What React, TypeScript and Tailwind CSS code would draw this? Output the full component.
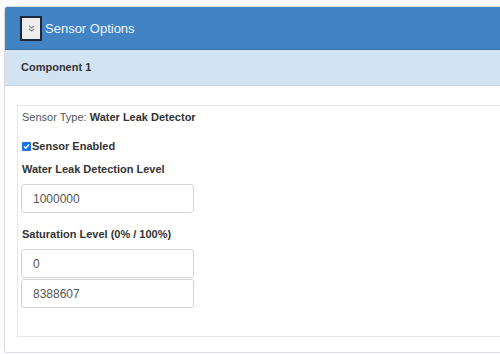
import React from "react";

export default function App() {
  const font = { fontFamily: '"Liberation Sans", Arial, sans-serif' };
  return (
    <div className="w-[500px] h-[354px] overflow-hidden bg-[#fcfbfd] pt-[6px] pl-[4px]" style={font}>
      <div className="w-[520px] h-[347px] border border-[#dcdcdc] rounded-[3px] bg-white flex flex-col overflow-hidden">
        <div className="h-[43px] shrink-0 bg-[#4283c4] border-b border-[#3a74ad] flex items-center pl-[15px] gap-[3px]">
          <div className="w-[22px] h-[25px] border-2 border-[#1c2738] bg-[#ededed] flex items-center justify-center">
            <svg width="7" height="7" viewBox="0 0 7 7" fill="none" stroke="#8a8a8a" strokeWidth="1.1">
              <path d="M1 1 L3.5 3 L6 1" />
              <path d="M1 4 L3.5 6 L6 4" />
            </svg>
          </div>
          <span className="text-[13px] text-[#eef4fb] leading-none">Sensor Options</span>
        </div>
        <div className="h-[36px] shrink-0 bg-[#d2e4f2] border-b border-[#c6d3df] flex items-center pl-[16px]">
          <span className="text-[11px] font-bold text-[#333]">Component 1</span>
        </div>
        <div className="pt-[19px] pl-[12px]">
          <div className="border border-[#e6e6e6] h-[232px] pl-[4px] pt-[3px] flex flex-col text-[11px] text-[#333]">
            <div className="h-[16px] leading-[16px]">
              <span className="text-[#555]">Sensor Type: </span>
              <span className="font-bold">Water Leak Detector</span>
            </div>
            <div className="h-[16px] mt-[13px] flex items-center">
              <span className="w-[9px] h-[9px] rounded-[1px] bg-[#1a73e8] flex items-center justify-center mr-[1px] -ml-[0px]">
                <svg width="7" height="7" viewBox="0 0 7 7" fill="none" stroke="white" strokeWidth="1.4">
                  <path d="M1 3.6 L2.8 5.3 L6 1.5" />
                </svg>
              </span>
              <span className="font-bold">Sensor Enabled</span>
            </div>
            <div className="h-[16px] leading-[16px] mt-[7px] font-bold">Water Leak Detection Level</div>
            <div className="mt-[7px] -ml-[1px] w-[173px] h-[29px] border border-[#d4d4d4] rounded-[3px] flex items-center pl-[11px] text-[12px] text-[#555]">
              1000000
            </div>
            <div className="h-[16px] leading-[16px] mt-[13px] font-bold">Saturation Level (0% / 100%)</div>
            <div className="mt-[7px] -ml-[1px] w-[173px] h-[29px] border border-[#d4d4d4] rounded-[3px] flex items-center pl-[11px] text-[12px] text-[#555]">
              0
            </div>
            <div className="mt-[1px] -ml-[1px] w-[173px] h-[29px] border border-[#d4d4d4] rounded-[3px] flex items-center pl-[11px] text-[12px] text-[#555]">
              8388607
            </div>
          </div>
        </div>
      </div>
    </div>
  );
}
